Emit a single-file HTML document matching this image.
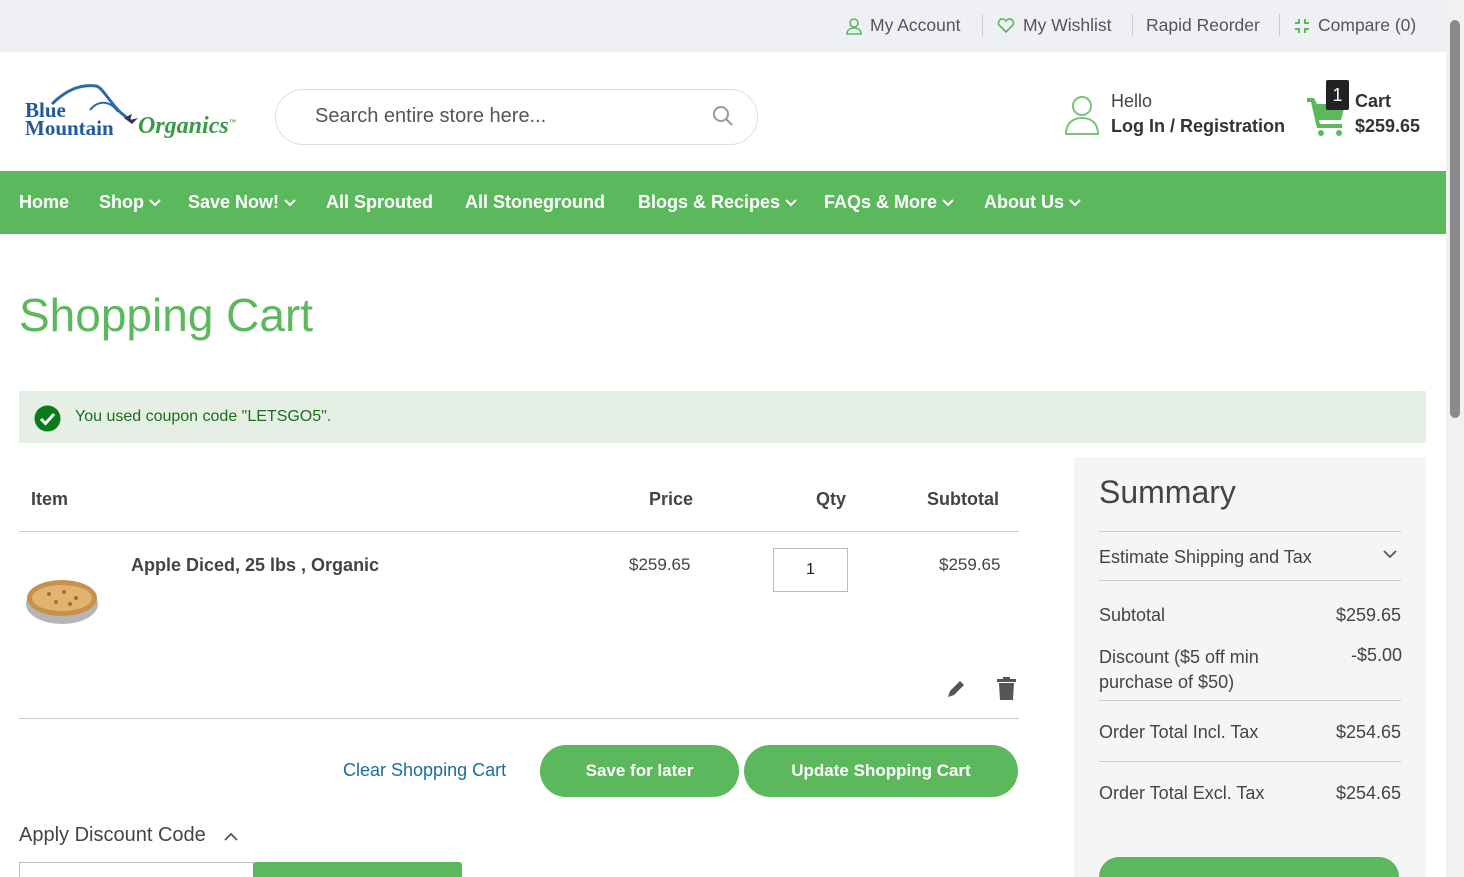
<!DOCTYPE html>
<html><head><meta charset="utf-8"><style>
*{box-sizing:border-box;margin:0;padding:0}
html,body{width:1464px;height:877px;overflow:hidden}
body{font-family:"Liberation Sans",sans-serif;color:#333;background:#fff;position:relative}
.a{position:absolute;white-space:nowrap}
.top{left:0;top:0;width:1446px;height:52px;background:#eff0f3}
.sep{position:absolute;top:14px;width:1px;height:22px;background:#ccc}
.nav{left:0;top:171px;width:1446px;height:63px;background:#5cb85c}
.n{color:#fff;font-weight:bold;font-size:18px;top:192px}
.n svg{margin-left:5px;vertical-align:middle}
.btn{background:#5cb85c;color:#fff;border-radius:26px;font-weight:bold;font-size:17px;text-align:center;line-height:52px}
.sum{left:1074px;top:457px;width:352px;height:420px;background:#f5f5f5}
.sumt{font-size:18px;color:#444}
.hr{position:absolute;height:1px;background:#ccc}
</style></head><body>
<div class="a top"></div>
<svg class="a" style="left:846px;top:17px" width="16" height="18" viewBox="0 0 16 18"><circle cx="8" cy="6" r="4" fill="none" stroke="#5cb85c" stroke-width="1.6"/><path d="M1 17c0-4 3-6 7-6s7 2 7 6z" fill="none" stroke="#5cb85c" stroke-width="1.6"/></svg>
<span class="a" style="left:870px;top:15px;font-size:17.5px;color:#555">My Account</span>
<div class="sep" style="left:982px"></div>
<svg class="a" style="left:997px;top:18px" width="18" height="16" viewBox="0 0 18 16"><path d="M9 14L2 7a3.5 3.5 0 0 1 7-4 3.5 3.5 0 0 1 7 4z" fill="none" stroke="#5cb85c" stroke-width="1.6"/></svg>
<span class="a" style="left:1023px;top:15px;font-size:17.5px;color:#555">My Wishlist</span>
<div class="sep" style="left:1132px"></div>
<span class="a" style="left:1146px;top:15px;font-size:17.5px;color:#555">Rapid Reorder</span>
<div class="sep" style="left:1279px"></div>
<svg class="a" style="left:1294px;top:18px" width="16" height="16" viewBox="0 0 16 16" stroke="#5cb85c" stroke-width="2" fill="none"><path d="M1 5h4V1M11 1v4h4M15 11h-4v4M5 15v-4H1"/></svg>
<span class="a" style="left:1318px;top:15px;font-size:17.5px;color:#555">Compare (0)</span>
<div class="a" style="left:1446px;top:0;width:18px;height:877px;background:#f1f1f1"></div>
<div class="a" style="left:1450px;top:20px;width:10px;height:398px;background:#8a8a8a;border-radius:5px"></div>

<svg class="a" style="left:24px;top:80px" width="216" height="66" viewBox="0 0 216 66"><path d="M28 24C42 10 56 4 72 6c6 1 12 14 24 26l12 10" fill="none" stroke="#2b6aa8" stroke-width="3"/><path d="M66 30c8-10 20-10 28 2" fill="none" stroke="#2b6aa8" stroke-width="2"/><path d="M100 38l8-4-2 6 8-2-6 6z" fill="#335"/></svg>
<span class="a" style="left:25px;top:101px;font-family:'Liberation Serif',serif;font-weight:bold;font-size:21px;color:#225a9a;line-height:18px">Blue<br>Mountain</span>
<span class="a" style="left:138px;top:113px;font-family:'Liberation Serif',serif;font-style:italic;font-weight:bold;font-size:24px;color:#3a9a4a">Organics<sup style="font-size:7px">™</sup></span>

<div class="a" style="left:275px;top:89px;width:483px;height:56px;border:1px solid #ddd;border-radius:28px"></div>
<span class="a" style="left:315px;top:105px;font-size:20px;color:#555">Search entire store here...</span>
<svg class="a" style="left:712px;top:105px" width="22" height="22" viewBox="0 0 22 22" fill="none" stroke="#999" stroke-width="2"><circle cx="9" cy="9" r="7"/><path d="M14 14l6 6"/></svg>

<svg class="a" style="left:1064px;top:94px" width="36" height="42" viewBox="0 0 36 42" fill="none" stroke="#7cc47c" stroke-width="2"><circle cx="18" cy="12" r="9"/><path d="M2 40c0-10 6-16 16-16s16 6 16 16z"/></svg>
<span class="a" style="left:1111px;top:91px;font-size:18px;color:#444">Hello</span>
<span class="a" style="left:1111px;top:116px;font-size:18px;font-weight:bold;color:#333">Log In / Registration</span>
<svg class="a" style="left:1307px;top:96px" width="40" height="40" viewBox="0 0 40 40" fill="#5cb85c"><path d="M0 2h7l3 6h28l-4 16H12l1 4h22v4H10L4 6H0z"/><circle cx="14" cy="37" r="3"/><circle cx="32" cy="37" r="3"/></svg>
<div class="a" style="left:1326px;top:80px;width:23px;height:30px;background:#222;border-radius:2px;color:#fff;font-size:18px;text-align:center;line-height:30px">1</div>
<span class="a" style="left:1355px;top:91px;font-size:18px;font-weight:bold;color:#333">Cart</span>
<span class="a" style="left:1355px;top:116px;font-size:18px;font-weight:bold;color:#333">$259.65</span>

<div class="a nav"></div>
<span class="a n" style="left:19px">Home</span>
<span class="a n" style="left:99px">Shop<svg width="12" height="8" viewBox="0 0 12 8"><path d="M1 1l5 5 5-5" fill="none" stroke="#fff" stroke-width="2"/></svg></span>
<span class="a n" style="left:188px">Save Now!<svg width="12" height="8" viewBox="0 0 12 8"><path d="M1 1l5 5 5-5" fill="none" stroke="#fff" stroke-width="2"/></svg></span>
<span class="a n" style="left:326px">All Sprouted</span>
<span class="a n" style="left:465px">All Stoneground</span>
<span class="a n" style="left:638px">Blogs &amp; Recipes<svg width="12" height="8" viewBox="0 0 12 8"><path d="M1 1l5 5 5-5" fill="none" stroke="#fff" stroke-width="2"/></svg></span>
<span class="a n" style="left:824px">FAQs &amp; More<svg width="12" height="8" viewBox="0 0 12 8"><path d="M1 1l5 5 5-5" fill="none" stroke="#fff" stroke-width="2"/></svg></span>
<span class="a n" style="left:984px">About Us<svg width="12" height="8" viewBox="0 0 12 8"><path d="M1 1l5 5 5-5" fill="none" stroke="#fff" stroke-width="2"/></svg></span>

<span class="a" style="left:19px;top:288px;font-size:46px;color:#5cb85c">Shopping Cart</span>

<div class="a" style="left:19px;top:391px;width:1407px;height:52px;background:#e5efe5"></div>
<svg class="a" style="left:34px;top:405px" width="27" height="27" viewBox="0 0 27 27"><circle cx="13.5" cy="13.5" r="13" fill="#0a7a1a"/><path d="M7 14l4.5 4.5L20 9" stroke="#fff" stroke-width="3" fill="none"/></svg>
<span class="a" style="left:75px;top:408px;font-size:16px;color:#1a6e1a">You used coupon code "LETSGO5".</span>

<span class="a" style="left:31px;top:489px;font-size:18px;font-weight:bold;color:#444">Item</span>
<span class="a" style="left:649px;top:489px;font-size:18px;font-weight:bold;color:#444">Price</span>
<span class="a" style="left:816px;top:489px;font-size:18px;font-weight:bold;color:#444">Qty</span>
<span class="a" style="left:927px;top:489px;font-size:18px;font-weight:bold;color:#444">Subtotal</span>
<div class="hr" style="left:19px;top:531px;width:1000px"></div>
<svg class="a" style="left:24px;top:574px" width="76" height="52" viewBox="0 0 76 52"><ellipse cx="38" cy="30" rx="36" ry="20" fill="#b5b5b5"/><ellipse cx="38" cy="24" rx="35" ry="18" fill="#c8904a"/><ellipse cx="38" cy="24" rx="30" ry="13" fill="#e0b470"/><g fill="#a86c2c"><circle cx="25" cy="20" r="2"/><circle cx="40" cy="18" r="2"/><circle cx="52" cy="24" r="2"/><circle cx="32" cy="28" r="2"/><circle cx="46" cy="30" r="2"/></g></svg>
<span class="a" style="left:131px;top:555px;font-size:18px;font-weight:bold;color:#444">Apple Diced, 25 lbs , Organic</span>
<span class="a" style="left:629px;top:555px;font-size:17px;color:#444">$259.65</span>
<div class="a" style="left:773px;top:548px;width:75px;height:44px;border:1px solid #bbb;text-align:center;line-height:42px;font-size:16px;color:#222">1</div>
<span class="a" style="left:939px;top:555px;font-size:17px;color:#444">$259.65</span>
<svg class="a" style="left:945px;top:678px" width="22" height="22" viewBox="0 0 22 22"><path d="M3 19l2-6L15 3l4 4L9 17z" fill="#555"/></svg>
<svg class="a" style="left:997px;top:677px" width="19" height="23" viewBox="0 0 19 23" fill="#555"><rect x="0" y="2" width="19" height="3"/><rect x="6" y="0" width="7" height="3"/><path d="M2 6h15l-1 17H3z"/></svg>
<div class="hr" style="left:19px;top:718px;width:1000px"></div>
<span class="a" style="left:343px;top:760px;font-size:18px;color:#1a6e9a">Clear Shopping Cart</span>
<div class="a btn" style="left:540px;top:745px;width:199px;height:52px">Save for later</div>
<div class="a btn" style="left:744px;top:745px;width:274px;height:52px">Update Shopping Cart</div>
<span class="a" style="left:19px;top:824px;font-size:20px;color:#444">Apply Discount Code</span>
<svg class="a" style="left:224px;top:832px" width="14" height="10" viewBox="0 0 14 10"><path d="M1 8l6-6 6 6" fill="none" stroke="#555" stroke-width="1.8"/></svg>
<div class="a" style="left:19px;top:862px;width:235px;height:15px;border:1px solid #bbb;border-bottom:0"></div>
<div class="a" style="left:253px;top:862px;width:209px;height:15px;background:#5cb85c;border-radius:3px 3px 0 0"></div>

<div class="a sum"></div>
<span class="a" style="left:1099px;top:474px;font-size:32px;color:#444">Summary</span>
<div class="hr" style="left:1099px;top:531px;width:302px"></div>
<span class="a sumt" style="left:1099px;top:547px">Estimate Shipping and Tax</span>
<svg class="a" style="left:1383px;top:549px" width="14" height="10" viewBox="0 0 14 10"><path d="M1 2l6 6 6-6" fill="none" stroke="#555" stroke-width="1.8"/></svg>
<div class="hr" style="left:1099px;top:580px;width:302px"></div>
<span class="a sumt" style="left:1099px;top:605px">Subtotal</span>
<span class="a sumt" style="left:1336px;top:605px">$259.65</span>
<span class="a sumt" style="left:1099px;top:645px;line-height:25px">Discount ($5 off min<br>purchase of $50)</span>
<span class="a sumt" style="left:1351px;top:645px">-$5.00</span>
<div class="hr" style="left:1099px;top:700px;width:302px"></div>
<span class="a sumt" style="left:1099px;top:722px">Order Total Incl. Tax</span>
<span class="a sumt" style="left:1336px;top:722px">$254.65</span>
<div class="hr" style="left:1099px;top:761px;width:302px"></div>
<span class="a sumt" style="left:1099px;top:783px">Order Total Excl. Tax</span>
<span class="a sumt" style="left:1336px;top:783px">$254.65</span>
<div class="a" style="left:1099px;top:857px;width:300px;height:20px;background:#5cb85c;border-radius:24px 24px 0 0"></div>
</body></html>
